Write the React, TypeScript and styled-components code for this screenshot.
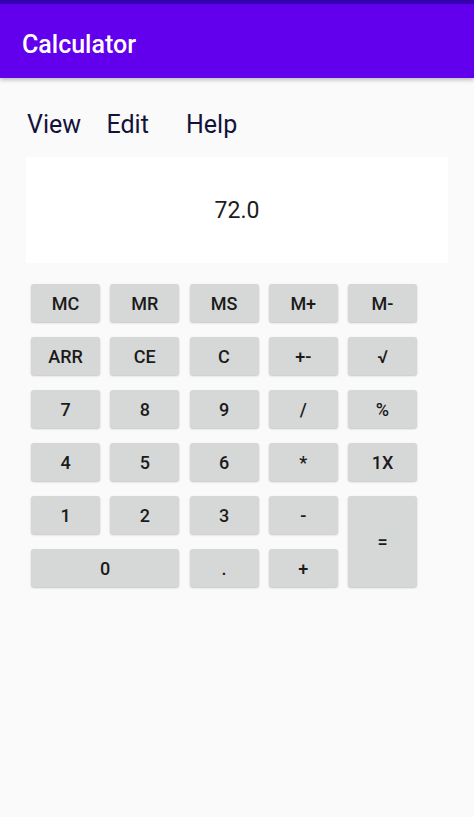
import styled, { createGlobalStyle } from 'styled-components';

const GlobalStyle = createGlobalStyle`
  html, body {
    margin: 0;
    padding: 0;
    background: #fafafa;
    font-family: Roboto, "Liberation Sans", sans-serif;
  }
`;

const Screen = styled.div`
  width: 474px;
  min-height: 817px;
  background: #fafafa;
  display: flex;
  flex-direction: column;
`;

const StatusBar = styled.div`
  height: 4px;
  background: #3700b3;
`;

const AppBar = styled.header`
  height: 74px;
  background: #6200ee;
  display: flex;
  align-items: center;
  padding: 8px 0 0 22px;
  box-sizing: border-box;
  box-shadow: 0 2px 4px rgba(0, 0, 0, 0.25);
  position: relative;
  z-index: 1;
`;

const Title = styled.h1`
  margin: 0;
  color: #ffffff;
  font-size: 25px;
  font-weight: 500;
  line-height: 30px;
`;

const Content = styled.main`
  padding: 32px 26px 0 26px;
  display: flex;
  flex-direction: column;
`;

const Menu = styled.nav`
  display: grid;
  grid-template-columns: repeat(3, 79.5px);
  padding-left: 1px;
`;

const MenuItem = styled.span`
  font-size: 25px;
  line-height: 30px;
  color: #13133a;
`;

const Display = styled.div`
  margin-top: 17px;
  width: 422px;
  height: 106px;
  background: #ffffff;
  display: flex;
  align-items: center;
  justify-content: center;
  font-size: 23px;
  color: #1c1c1c;
`;

const Keypad = styled.div`
  margin: 21px 0 0 5px;
  display: grid;
  grid-template-columns: repeat(5, 69px);
  grid-auto-rows: 38px;
  column-gap: 10.25px;
  row-gap: 15px;
`;

const Key = styled.button<{ $span?: number; $rows?: number }>`
  grid-column: span ${(p) => p.$span ?? 1};
  grid-row: span ${(p) => p.$rows ?? 1};
  border: none;
  border-radius: 3px;
  background: #d6d7d7;
  box-shadow: 0 1px 2px rgba(0, 0, 0, 0.22);
  font-family: Roboto, "Liberation Sans", sans-serif;
  font-size: 18px;
  font-weight: 500;
  color: #1b1b1b;
  padding: 0;
  cursor: pointer;
`;

const rows = [
  ['MC', 'MR', 'MS', 'M+', 'M-'],
  ['ARR', 'CE', 'C', '+-', '√'],
  ['7', '8', '9', '/', '%'],
  ['4', '5', '6', '*', '1X'],
];

export default function App() {
  return (
    <>
      <GlobalStyle />
      <Screen>
        <StatusBar />
        <AppBar>
          <Title>Calculator</Title>
        </AppBar>
        <Content>
          <Menu>
            <MenuItem>View</MenuItem>
            <MenuItem>Edit</MenuItem>
            <MenuItem>Help</MenuItem>
          </Menu>
          <Display>72.0</Display>
          <Keypad>
            {rows.flat().map((k) => (
              <Key key={k}>{k}</Key>
            ))}
            <Key>1</Key>
            <Key>2</Key>
            <Key>3</Key>
            <Key>-</Key>
            <Key $rows={2}>=</Key>
            <Key $span={2}>0</Key>
            <Key>.</Key>
            <Key>+</Key>
          </Keypad>
        </Content>
      </Screen>
    </>
  );
}
